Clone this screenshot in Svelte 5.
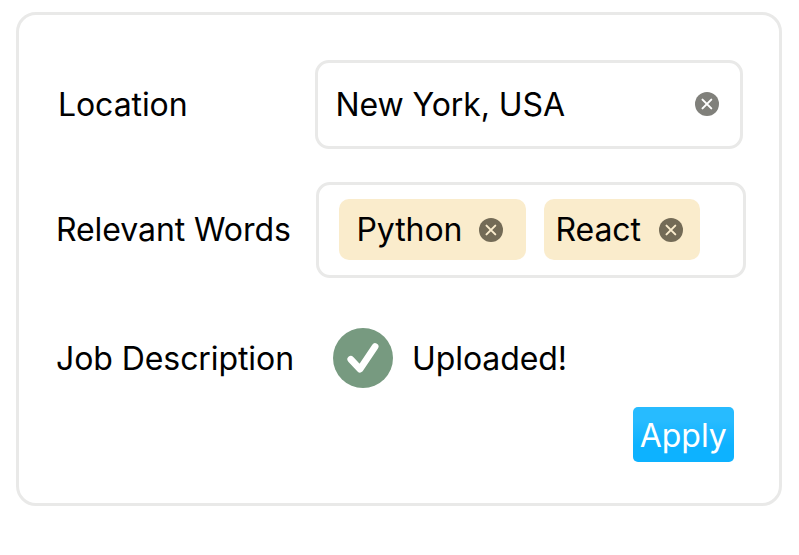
<script>
  const tags = ['Python', 'React'];
</script>

{#snippet clear()}
  <svg class="clear" viewBox="0 0 24 24" aria-hidden="true">
    <circle cx="12" cy="12" r="12" />
    <path d="M7.5 7.6l8.8 8.8M16.3 7.6l-8.8 8.8" />
  </svg>
{/snippet}

<form class="card">
  <div class="row location">
    <span class="label">Location</span>
    <div class="field">
      <span class="value">New York, USA</span>
      {@render clear()}
    </div>
  </div>

  <div class="row words">
    <span class="label">Relevant Words</span>
    <div class="field">
      {#each tags as tag}
        <span class="tag {tag.toLowerCase()}">
          <span class="value">{tag}</span>
          {@render clear()}
        </span>
      {/each}
    </div>
  </div>

  <div class="row job">
    <span class="label">Job Description</span>
    <svg class="check" viewBox="0 0 60 60" aria-hidden="true">
      <circle cx="30" cy="30" r="30" />
      <path d="M17.8 31.3L27 41.1L42.1 18.6" />
    </svg>
    <span class="status">Uploaded!</span>
  </div>

  <button type="button">Apply</button>
</form>

<style>
  :global(body) {
    background: #fff;
  }
  .card {
    box-sizing: border-box;
    width: 766px;
    height: 493.5px;
    margin: 12px 0 0 15.5px;
    border: 3px solid #e9e9e8;
    border-radius: 20px;
    display: flex;
    flex-direction: column;
    padding: 45px 0 0 37.5px;
    font: 400 32px/40px Inter, sans-serif;
    letter-spacing: -0.08px;
    color: #000;
    white-space: nowrap;
  }
  .row {
    display: flex;
    align-items: center;
  }
  .label,
  .value,
  .status {
    padding-top: 2px;
  }
  .label {
    flex: none;
  }
  .field {
    box-sizing: border-box;
    display: flex;
    align-items: center;
    border: 3px solid #e9e9e8;
    border-radius: 14px;
  }
  .location .label {
    box-sizing: border-box;
    padding-left: 2px;
    width: 258.5px;
  }
  .location .field {
    width: 428px;
    height: 88.5px;
    padding: 0 21px 0 18px;
    justify-content: space-between;
  }
  .words {
    margin-top: 33px;
  }
  .words .field {
    width: 430px;
    height: 96.5px;
    padding-left: 20px;
    gap: 17.5px;
  }
  .words .label {
    width: 260px;
  }
  .words .label,
  .words .value {
    padding-top: 1px;
  }
  .tag {
    box-sizing: border-box;
    height: 61px;
    display: flex;
    align-items: center;
    justify-content: space-between;
    border-radius: 10px;
    background: #faeccc;
  }
  .python {
    width: 187px;
    padding: 0 23px 0 17.5px;
  }
  .react {
    width: 156.5px;
    padding: 0 17.5px 0 12px;
  }
  .clear {
    flex: none;
    width: 24px;
    height: 24px;
  }
  .clear circle {
    fill: #80807b;
  }
  .clear path {
    fill: none;
    stroke: #fff;
    stroke-width: 2;
    stroke-linecap: round;
  }
  .tag .clear circle {
    fill: #736b56;
  }
  .tag .clear path {
    stroke: #faeccc;
  }
  .job {
    margin-top: 49.5px;
    height: 60px;
  }
  .job .label {
    width: 277px;
  }
  .check {
    width: 60px;
    height: 60px;
  }
  .check circle {
    fill: #779a80;
  }
  .check path {
    fill: none;
    stroke: #fff;
    stroke-width: 6.8;
    stroke-linecap: round;
    stroke-linejoin: round;
  }
  .status {
    margin-left: 19px;
  }
  button {
    width: 101.5px;
    height: 55px;
    margin: 19.5px 0 0 576.5px;
    padding: 2px 0 0;
    border: 0;
    border-radius: 5px;
    background: linear-gradient(#27bbff 25%, #0db2ff 70%);
    color: #fff;
    font: inherit;
    letter-spacing: inherit;
  }
</style>
